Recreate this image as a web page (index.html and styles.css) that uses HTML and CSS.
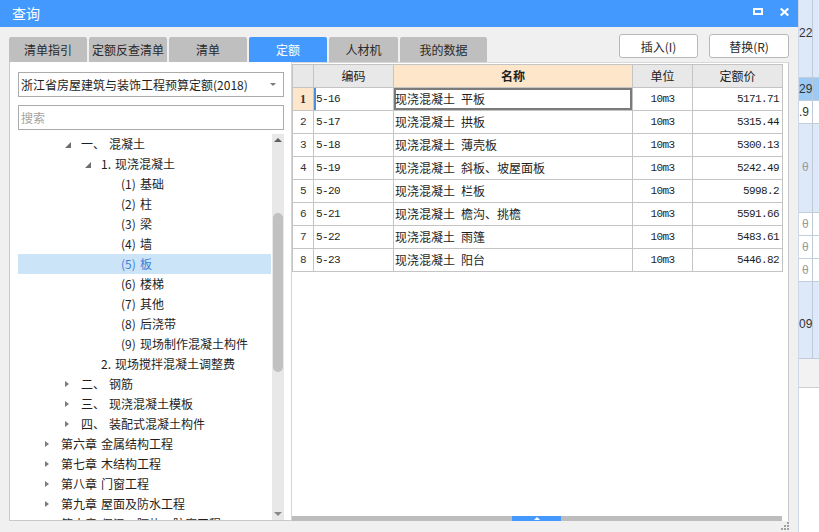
FILE: index.html
```html
<!DOCTYPE html>
<html lang="zh-CN">
<head>
<meta charset="utf-8">
<title>查询</title>
<link rel="stylesheet" href="styles.css">
</head>
<body>
<div class="screen">
  <div class="dialog">
    <div class="titlebar">
      <span class="title">查询</span>
      <div class="win-btns">
        <svg class="ico" width="10" height="7" viewBox="0 0 10 7"><rect x="1" y="1" width="8" height="5" fill="none" stroke="#fff" stroke-width="2"/></svg>
        <svg class="ico" width="9" height="8" viewBox="0 0 9 8"><path d="M0.7 0.5 L8.3 7.5 M8.3 0.5 L0.7 7.5" stroke="#fff" stroke-width="2.2"/></svg>
      </div>
    </div>

    <div class="toolbar">
      <div class="tabs">
        <div class="tab">清单指引</div>
        <div class="tab">定额反查清单</div>
        <div class="tab">清单</div>
        <div class="tab active">定额</div>
        <div class="tab tab-short">人材机</div>
        <div class="tab tab-wide">我的数据</div>
      </div>
      <div class="actions">
        <button class="btn">插入(I)</button>
        <button class="btn btn-wide">替换(R)</button>
      </div>
    </div>

    <div class="main">
      <div class="left">
        <div class="select">
          <span class="select-text">浙江省房屋建筑与装饰工程预算定额(2018)</span>
          <span class="caret"></span>
        </div>
        <div class="search">搜索</div>
        <div class="tree">
          <div class="tree-list">
            <div class="node lv1"><span class="tg open"></span><span class="n n-cn">一、</span>混凝土</div>
            <div class="node lv2"><span class="tg open"></span><span class="n n-dot">1.</span>现浇混凝土</div>
            <div class="node lv3"><span class="tg"></span><span class="n n-par">(1)</span>基础</div>
            <div class="node lv3"><span class="tg"></span><span class="n n-par">(2)</span>柱</div>
            <div class="node lv3"><span class="tg"></span><span class="n n-par">(3)</span>梁</div>
            <div class="node lv3"><span class="tg"></span><span class="n n-par">(4)</span>墙</div>
            <div class="node lv3 selected"><span class="tg"></span><span class="n n-par">(5)</span>板</div>
            <div class="node lv3"><span class="tg"></span><span class="n n-par">(6)</span>楼梯</div>
            <div class="node lv3"><span class="tg"></span><span class="n n-par">(7)</span>其他</div>
            <div class="node lv3"><span class="tg"></span><span class="n n-par">(8)</span>后浇带</div>
            <div class="node lv3"><span class="tg"></span><span class="n n-par">(9)</span>现场制作混凝土构件</div>
            <div class="node lv2"><span class="tg"></span><span class="n n-dot">2.</span>现场搅拌混凝土调整费</div>
            <div class="node lv1"><span class="tg closed"></span><span class="n n-cn">二、</span>钢筋</div>
            <div class="node lv1"><span class="tg closed"></span><span class="n n-cn">三、</span>现浇混凝土模板</div>
            <div class="node lv1"><span class="tg closed"></span><span class="n n-cn">四、</span>装配式混凝土构件</div>
            <div class="node lv0"><span class="tg closed"></span><span class="n n-ch">第六章</span>金属结构工程</div>
            <div class="node lv0"><span class="tg closed"></span><span class="n n-ch">第七章</span>木结构工程</div>
            <div class="node lv0"><span class="tg closed"></span><span class="n n-ch">第八章</span>门窗工程</div>
            <div class="node lv0"><span class="tg closed"></span><span class="n n-ch">第九章</span>屋面及防水工程</div>
            <div class="node lv0"><span class="tg closed"></span><span class="n n-ch">第十章</span>保温、隔热、防腐工程</div>
          </div>
          <div class="vscroll">
            <span class="arrow-up"></span>
            <span class="thumb"></span>
            <span class="arrow-down"></span>
          </div>
        </div>
      </div>

      <div class="right">
        <div class="grid">
          <div class="c h"></div>
          <div class="c h ctr">编码</div>
          <div class="c h hl ctr">名称</div>
          <div class="c h ctr">单位</div>
          <div class="c h ctr">定额价</div>

          <div class="c num cur">1</div>
          <div class="c code cur-code">5-16</div>
          <div class="c name cur-cell">现浇混凝土<span class="sp"></span>平板</div>
          <div class="c unit">10m3</div>
          <div class="c price">5171.71</div>

          <div class="c num">2</div>
          <div class="c code">5-17</div>
          <div class="c name">现浇混凝土<span class="sp"></span>拱板</div>
          <div class="c unit">10m3</div>
          <div class="c price">5315.44</div>

          <div class="c num">3</div>
          <div class="c code">5-18</div>
          <div class="c name">现浇混凝土<span class="sp"></span>薄壳板</div>
          <div class="c unit">10m3</div>
          <div class="c price">5300.13</div>

          <div class="c num">4</div>
          <div class="c code">5-19</div>
          <div class="c name">现浇混凝土<span class="sp"></span>斜板、坡屋面板</div>
          <div class="c unit">10m3</div>
          <div class="c price">5242.49</div>

          <div class="c num">5</div>
          <div class="c code">5-20</div>
          <div class="c name">现浇混凝土<span class="sp"></span>栏板</div>
          <div class="c unit">10m3</div>
          <div class="c price">5998.2</div>

          <div class="c num">6</div>
          <div class="c code">5-21</div>
          <div class="c name">现浇混凝土<span class="sp"></span>檐沟、挑檐</div>
          <div class="c unit">10m3</div>
          <div class="c price">5591.66</div>

          <div class="c num">7</div>
          <div class="c code">5-22</div>
          <div class="c name">现浇混凝土<span class="sp"></span>雨篷</div>
          <div class="c unit">10m3</div>
          <div class="c price">5483.61</div>

          <div class="c num">8</div>
          <div class="c code">5-23</div>
          <div class="c name">现浇混凝土<span class="sp"></span>阳台</div>
          <div class="c unit">10m3</div>
          <div class="c price">5446.82</div>
        </div>
        <div class="grid-fill"></div>
        <div class="hbar"><span class="handle"><span class="handle-arrow"></span></span></div>
      </div>
    </div>

    <div class="footer">
      <svg width="8" height="8" viewBox="0 0 8 8" fill="#a0a0a0"><rect x="6" y="0" width="2" height="2"/><rect x="3" y="3" width="2" height="2"/><rect x="6" y="3" width="2" height="2"/><rect x="0" y="6" width="2" height="2"/><rect x="3" y="6" width="2" height="2"/><rect x="6" y="6" width="2" height="2"/></svg>
    </div>
  </div>

  <div class="app-strip">
    <div class="ap ap-top">22</div>
    <div class="ap ap-sel">29</div>
    <div class="ap ap-white">.9</div>
    <div class="ap ap-tall theta">θ</div>
    <div class="ap ap-white theta">θ</div>
    <div class="ap ap-white theta">θ</div>
    <div class="ap ap-white theta">θ</div>
    <div class="ap ap-tall2">09</div>
    <div class="ap ap-grey"></div>
    <div class="ap ap-rest"></div>
  </div>
</div>
</body>
</html>
```

FILE: styles.css
```css
* { box-sizing: border-box; }
html, body { margin: 0; padding: 0; }
body {
  width: 819px;
  height: 532px;
  overflow: hidden;
  font-family: "Noto Sans CJK SC", "Noto Sans", sans-serif;
  font-size: 12px;
  color: #1e1e1e;
  background: #fff;
}
.screen { display: flex; width: 819px; height: 532px; }

/* dialog */
.dialog {
  width: 798px;
  height: 532px;
  flex: none;
  background: #f0f0f0;
  display: flex;
  flex-direction: column;
}
.titlebar {
  height: 27px;
  flex: none;
  background: #4499fe;
  color: #fff;
  display: flex;
  justify-content: space-between;
  padding: 0 9px 0 12px;
}
.title { font-size: 14px; line-height: 27px; }
.win-btns { display: flex; align-items: flex-start; gap: 17px; padding-top: 8px; }
.ico { display: block; }

/* toolbar */
.toolbar {
  height: 35px;
  flex: none;
  display: flex;
  justify-content: space-between;
  padding: 0 9px;
}
.tabs { display: flex; gap: 2px; align-self: flex-end; }
.tab {
  width: 78px;
  height: 25px;
  background: #bfbfbf;
  border-radius: 2px 2px 0 0;
  display: flex;
  align-items: center;
  justify-content: center;
  color: #2a2a2a;
  line-height: 25px;
}
.tab-short { width: 69px; }
.tab-wide { width: 87px; }
.tab.active { background: #4499fe; color: #fff; }
.actions { display: flex; gap: 11px; padding-top: 7px; }
.btn {
  width: 79px;
  height: 24px;
  background: #fff;
  border: 1px solid #b8b8b8;
  border-radius: 3px;
  font: inherit;
  color: #2a2a2a;
  padding: 0;
}
.btn-wide { width: 80px; }

/* main */
.main { height: 459px; flex: none; display: flex; padding: 0 9px; }
.left {
  width: 282px;
  flex: none;
  background: #fff;
  border-left: 1px solid #c9c9c9;
  border-bottom: 1px solid #c9c9c9;
  padding: 10px 7px 0 8px;
  display: flex;
  flex-direction: column;
}
.select {
  height: 25px;
  flex: none;
  border: 1px solid #ababab;
  display: flex;
  align-items: center;
  justify-content: space-between;
  padding: 0 7px 0 2px;
  margin-bottom: 8px;
  line-height: 23px;
}
.caret {
  width: 0; height: 0;
  border-left: 3px solid transparent;
  border-right: 3px solid transparent;
  border-top: 3px solid #7a7a7a;
}
.search {
  height: 25px;
  flex: none;
  border: 1px solid #ababab;
  color: #a4a4a4;
  padding-left: 2px;
  line-height: 23px;
  margin-bottom: 4px;
}
.tree { flex: 1; display: flex; overflow: hidden; min-height: 0; }
.tree-list { flex: 1; overflow: hidden; }
.node {
  height: 20px;
  line-height: 20px;
  display: flex;
  align-items: center;
  white-space: nowrap;
  margin-right: 1px;
}
.node.selected { background: #cce4f7; color: #3b80d6; }
.lv0 { padding-left: 23px; }
.lv1 { padding-left: 43px; }
.lv2 { padding-left: 63px; }
.lv3 { padding-left: 83px; }
.tg { width: 20px; height: 20px; flex: none; display: flex; align-items: center; padding-left: 4px; }
.tg.open::before {
  content: "";
  width: 0; height: 0;
  border-left: 6px solid transparent;
  border-bottom: 6px solid #6e6e6e;
  margin-top: 1px;
}
.tg.closed::before {
  content: "";
  width: 0; height: 0;
  border-left: 4px solid #7c7c7c;
  border-top: 3.5px solid transparent;
  border-bottom: 3.5px solid transparent;
}
.n { display: inline-block; flex: none; }
.n-cn { width: 28px; }
.n-dot { width: 14px; }
.n-par { width: 19px; }
.n-ch { width: 40px; }

.vscroll {
  width: 12px;
  flex: none;
  background: #e8e8e8;
  display: flex;
  flex-direction: column;
  align-items: center;
}
.arrow-up {
  margin-top: 4px;
  width: 0; height: 0;
  border-left: 4px solid transparent;
  border-right: 4px solid transparent;
  border-bottom: 4px solid #5f5f5f;
}
.thumb {
  margin-top: 71px;
  width: 10px;
  height: 159px;
  border-radius: 5px;
  background: #c1c1c1;
}
.arrow-down {
  margin-top: auto;
  margin-bottom: 4px;
  width: 0; height: 0;
  border-left: 4px solid transparent;
  border-right: 4px solid transparent;
  border-top: 4px solid #8a8a8a;
}

/* right table panel */
.right {
  width: 498px;
  flex: none;
  background: #fff;
  border-left: 1px solid #d4d4d4;
  border-right: 1px solid #c9c9c9;
  border-top: 1px solid #d8d8d8;
  padding-top: 1px;
  display: flex;
  flex-direction: column;
}
.grid {
  width: 491px;
  display: grid;
  grid-template-columns: 21px 80px 239px 60px 90px;
  grid-auto-rows: 23px;
  border-left: 1px solid #c4c4c4;
  border-top: 1px solid #c4c4c4;
}
.c {
  border-right: 1px solid #c4c4c4;
  border-bottom: 1px solid #c4c4c4;
  line-height: 22px;
  white-space: nowrap;
  overflow: hidden;
}
.h { background: #e8e8e8; color: #222; }
.h.hl { background: #fde6c9; font-weight: bold; }
.ctr { text-align: center; }
.num, .code, .unit, .price {
  font-family: "Liberation Mono", "DejaVu Sans Mono", monospace;
  font-size: 11px;
  letter-spacing: -0.6px;
}
.num { text-align: center; color: #333; }
.num.cur { background: #fde6c9; font-weight: bold; font-family: "Liberation Serif", serif; font-size: 12px; letter-spacing: 0; }
.code { padding-left: 2px; }
.cur-code { box-shadow: inset 2px 0 0 #4a90e2; padding-left: 2px; }
.name { padding-left: 1px; }
.cur-cell { box-shadow: inset 0 0 0 2px #7b7b7b; }
.sp { display: inline-block; width: 6px; }
.unit { text-align: center; }
.price { text-align: right; padding-right: 3px; }
.grid-fill { flex: 1; }
.hbar {
  width: 490px;
  height: 5px;
  flex: none;
  background: #bdbdbd;
  display: flex;
}
.handle {
  margin-left: 220px;
  width: 49px;
  height: 5px;
  background: #4499fe;
  display: flex;
  justify-content: center;
  align-items: flex-end;
  padding-bottom: 1px;
}
.handle-arrow {
  width: 0; height: 0;
  border-left: 3px solid transparent;
  border-right: 3px solid transparent;
  border-bottom: 3px solid #fff;
}

.footer {
  height: 11px;
  flex: none;
  display: flex;
  justify-content: flex-end;
  padding: 1px 9px 0 0;
}

/* background app strip */
.app-strip {
  width: 21px;
  flex: none;
  display: flex;
  flex-direction: column;
  font-family: "Liberation Sans", sans-serif;
  font-size: 12px;
  color: #333;
  border-left: 1px solid #cfd8e4;
}
.ap {
  background: #dde8f9 linear-gradient(to right, transparent 13px, #bfc9d8 13px, #bfc9d8 14px, transparent 14px);
  border-bottom: 1px solid #c3ccd9;
  white-space: nowrap;
  overflow: hidden;
}
.ap-top { height: 78px; padding-top: 26px; line-height: 14px; }
.ap-sel { height: 23px; line-height: 22px; background-color: #9ccaf6; }
.ap-white { height: 23px; line-height: 22px; background-color: #fff; }
.ap-tall { height: 89px; line-height: 86px; }
.ap-tall2 { height: 77px; line-height: 84px; }
.theta { color: #9a9a9a; padding-left: 3px; }
.ap-grey { height: 29px; background: #f2f2f2; border-bottom: 1px solid #cfcfcf; }
.ap-rest { flex: 1; background: #fff; border: none; }
```
